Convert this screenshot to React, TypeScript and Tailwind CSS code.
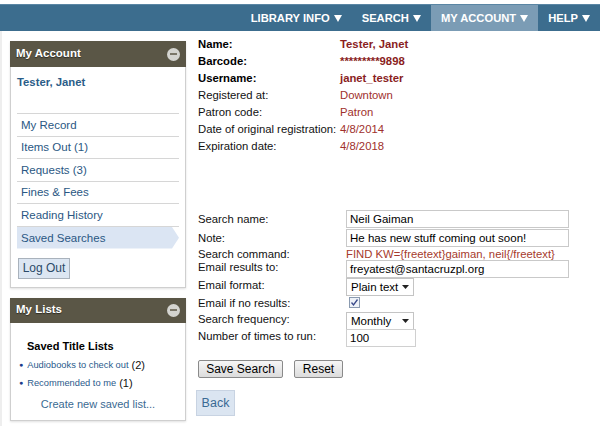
import React from "react";

const Tri = () => (
  <svg width="8" height="8" viewBox="0 0 8 8" className="inline-block ml-[4px]">
    <path d="M0 1 L8 1 L4 8 Z" fill="white" />
  </svg>
);

const Minus = () => (
  <div className="w-[13px] h-[13px] rounded-full bg-[#d4d4d0] flex items-center justify-center">
    <div className="w-[7px] h-[2px] bg-[#7a7668]" />
  </div>
);

const SmallArrow = () => (
  <svg width="7" height="4" viewBox="0 0 7 4">
    <path d="M0 0 L7 0 L3.5 4 Z" fill="#222" />
  </svg>
);

export default function App() {
  const nav = [
    { t: "LIBRARY INFO", a: false },
    { t: "SEARCH", a: false },
    { t: "MY ACCOUNT", a: true },
    { t: "HELP", a: false },
  ];
  const menu = ["My Record", "Items Out (1)", "Requests (3)", "Fines & Fees", "Reading History"];
  const info: [string, string, boolean][] = [
    ["Name:", "Tester, Janet", true],
    ["Barcode:", "*********9898", true],
    ["Username:", "janet_tester", true],
    ["Registered at:", "Downtown", false],
    ["Patron code:", "Patron", false],
    ["Date of original registration:", "4/8/2014", false],
    ["Expiration date:", "4/8/2018", false],
  ];
  return (
    <div className="w-[600px] h-[426px] bg-white overflow-hidden font-['Liberation_Sans',Arial,sans-serif] text-[11.3px] text-[#111]">
      <div className="h-[4px]" />
      <nav className="h-[27px] bg-[#3c6d8e] border-t border-[#5a86a4] flex justify-end text-white font-bold text-[11.2px]">
        {nav.map((n) => (
          <div
            key={n.t}
            className={
              n.a
                ? "flex items-center px-[10px] bg-[#7b9cb5]"
                : "flex items-center px-[10px]"
            }
          >
            {n.t}
            <Tri />
          </div>
        ))}
      </nav>
      <div className="flex border-l-[2px] border-[#eeeeee] h-[395px]">
        <aside className="w-[176px] ml-[8px] mt-[10px] flex flex-col gap-[10px]">
          <div className="shadow-[0_1px_2px_rgba(0,0,0,0.12)]">
            <div className="h-[26px] bg-[#5a5646] px-[6px] flex items-center justify-between">
              <span className="text-white font-bold text-[11.5px] [text-shadow:0_1px_1px_rgba(0,0,0,0.5)]">My Account</span>
              <Minus />
            </div>
            <div className="border border-t-0 border-[#cfcfcf] px-[6px] pb-[8px]">
              <div className="h-[46px] pt-[7px] font-bold text-[#2b5d88] text-[11.3px]">Tester, Janet</div>
              {menu.map((m) => (
                <div key={m} className="h-[22.6px] border-t border-[#d6d6d6] flex items-center pl-[4px] pt-[1px] text-[#2a5783] text-[11.5px]">
                  {m}
                </div>
              ))}
              <div className="h-[22.6px] border-t border-[#d6d6d6]">
                <div className="h-full bg-[#dbe5f3] flex items-center pl-[4px] pt-[1px] text-[#2a5783] text-[11.5px] [clip-path:polygon(0_0,calc(100%-7px)_0,100%_50%,calc(100%-7px)_100%,0_100%)]">
                  Saved Searches
                </div>
              </div>
              <div className="mt-[9px] ml-[1px] w-[52px] h-[21px] bg-[#dce6f2] border border-[#a9b2bc] flex items-center justify-center text-[12px] text-[#2b4a68]">
                Log Out
              </div>
            </div>
          </div>
          <div className="shadow-[0_1px_2px_rgba(0,0,0,0.12)]">
            <div className="h-[25px] bg-[#5a5646] px-[6px] flex items-center justify-between">
              <span className="text-white font-bold text-[11.5px] [text-shadow:0_1px_1px_rgba(0,0,0,0.5)]">My Lists</span>
              <Minus />
            </div>
            <div className="border border-t-0 border-[#cfcfcf] h-[98px] pt-[16px]">
              <div className="pl-[16px] font-bold text-[11px] text-black leading-[14px]">Saved Title Lists</div>
              <div className="mt-[3px] pl-[8px] leading-[18px]">
                <div className="flex items-center">
                  <span className="text-[#1c3c8a] text-[7px] mr-[4px]">●</span>
                  <span className="text-[#2a5a8c] text-[9.3px]">Audiobooks to check out</span>
                  <span className="ml-[3px] text-[11px]">(2)</span>
                </div>
                <div className="flex items-center">
                  <span className="text-[#1c3c8a] text-[7px] mr-[4px]">●</span>
                  <span className="text-[#2a5a8c] text-[9.3px]">Recommended to me</span>
                  <span className="ml-[3px] text-[11px]">(1)</span>
                </div>
              </div>
              <div className="text-center mt-[4px] text-[#3a6a92] text-[11px]">Create new saved list...</div>
            </div>
          </div>
        </aside>
        <main className="ml-[12px] pt-[5px] flex-1">
          <div className="grid grid-cols-[142px_auto] leading-[17px]">
            {info.map(([l, v, b]) => (
              <React.Fragment key={l}>
                <div className={b ? "font-bold text-black" : "text-[#111]"}>{l}</div>
                <div className={b ? "font-bold text-[#8a1e1e]" : "text-[#a0302c]"}>{v}</div>
              </React.Fragment>
            ))}
          </div>
          <div className="mt-[55px] grid grid-cols-[148px_auto] grid-rows-[19px_19px_12px_18px_18px_16px_17px_18px] leading-[13px]">
            <div className="pt-[3px]">Search name:</div>
            <div className="pb-[1px]">
              <div className="w-[223px] h-[18px] border border-[#c9c9c9] flex items-center pl-[3px] text-[11.5px] text-black">Neil Gaiman</div>
            </div>
            <div className="pt-[3px]">Note:</div>
            <div className="pb-[1px]">
              <div className="w-[223px] h-[18px] border border-[#c9c9c9] flex items-center pl-[3px] text-[11.5px] text-black">He has new stuff coming out soon!</div>
            </div>
            <div className="pt-[0px]">Search command:</div>
            <div className="text-[#a63a2c] pt-[0px]">FIND KW={"{freetext}"}gaiman, neil{"{/freetext}"}</div>
            <div className="pt-[1px]">Email results to:</div>
            <div>
              <div className="w-[223px] h-[18px] border border-[#c9c9c9] flex items-center pl-[3px] text-[11.5px] text-black">freyatest@santacruzpl.org</div>
            </div>
            <div className="pt-[1px]">Email format:</div>
            <div>
              <div className="w-[68px] h-[18px] border border-[#c4c4c4] flex items-center justify-between pl-[4px] pr-[4px] text-[11.5px] text-black">
                Plain text <SmallArrow />
              </div>
            </div>
            <div className="pt-[1px]">Email if no results:</div>
            <div className="pt-[1px] pl-[3px]">
              <div className="w-[11px] h-[11px] border border-[#8a9ab0] bg-[#eef2f8] flex items-center justify-center">
                <svg width="9" height="9" viewBox="0 0 9 9">
                  <path d="M1.5 4.5 L3.5 7 L7.5 1.5" stroke="#3a4a8a" strokeWidth="1.3" fill="none" />
                </svg>
              </div>
            </div>
            <div className="pt-[1px]">Search frequency:</div>
            <div>
              <div className="w-[68px] h-[18px] border border-[#c4c4c4] flex items-center justify-between pl-[4px] pr-[4px] text-[11.5px] text-black">
                Monthly <SmallArrow />
              </div>
            </div>
            <div className="pt-[1px]">Number of times to run:</div>
            <div>
              <div className="w-[70px] h-[18px] border border-[#d0d0d0] flex items-center pl-[3px] text-[11.5px] text-black">100</div>
            </div>
          </div>
          <div className="mt-[13px] flex gap-[11px]">
            <div className="w-[85px] h-[18px] rounded-[2px] border border-[#8a8a8a] bg-gradient-to-b from-[#f6f6f6] to-[#dcdcdc] flex items-center justify-center text-[12px] text-black">Save Search</div>
            <div className="w-[49px] h-[18px] rounded-[2px] border border-[#8a8a8a] bg-gradient-to-b from-[#f6f6f6] to-[#dcdcdc] flex items-center justify-center text-[12px] text-black">Reset</div>
          </div>
          <div className="mt-[12px] -ml-[2px] w-[39px] h-[26px] bg-[#dbe5f1] border border-[#c8d3e2] flex items-center justify-center text-[12.5px] text-[#3a6a94]">Back</div>
        </main>
      </div>
    </div>
  );
}
